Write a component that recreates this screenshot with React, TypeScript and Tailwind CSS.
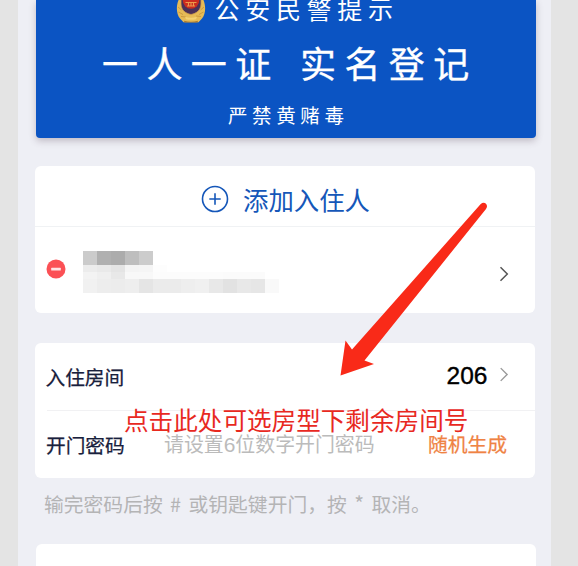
import React from "react";

const mosaicRows: { height: string; cells: string[] }[] = [
  { height: "h-[14px]", cells: ["bg-[#cbcbcb]", "bg-[#b0b0b0]", "bg-[#acacac]", "bg-[#bebebe]", "bg-[#cccccc]"] },
  { height: "h-[7px]", cells: ["bg-[#ececec]", "bg-[#e9e9e9]", "bg-[#e4e4e4]", "bg-[#f4f4f4]", "bg-[#f5f5f5]", "bg-[#fdfdfd]"] },
  {
    height: "h-[7px]",
    cells: ["bg-[#f3f3f3]", "bg-[#efefef]", "bg-[#e8e8e8]", "bg-[#f8f8f8]", "bg-[#f8f8f8]", "bg-[#fcfcfc]", "bg-[#fcfcfc]", "bg-[#fcfcfc]", "bg-[#fcfcfc]", "bg-[#fcfcfc]", "bg-[#fbfbfb]", "bg-[#fbfbfb]", "bg-[#fbfbfb]"],
  },
  {
    height: "h-[14px]",
    cells: ["bg-[#f1f1f1]", "bg-[#ededed]", "bg-[#ececec]", "bg-[#eeeeee]", "bg-[#e5e5e5]", "bg-[#ebebeb]", "bg-[#ebebeb]", "bg-[#eeeeee]", "bg-[#f0f0f0]", "bg-[#e8e8e8]", "bg-[#e2e2e2]", "bg-[#e8e8e8]", "bg-[#e6e6e6]", "bg-[#f9f9f9]"],
  },
];

function Mosaic() {
  return (
    <div className="flex w-[196px] flex-col">
      {mosaicRows.map((row, i) => (
        <div key={i} className={`flex ${row.height}`}>
          {row.cells.map((c, j) => (
            <div key={j} className={`w-[14px] ${c}`} />
          ))}
        </div>
      ))}
    </div>
  );
}

function PoliceBadge() {
  return (
    <svg width="30" height="34" viewBox="0 0 30 34" className="shrink-0">
      <path d="M3 9C0 15 0 24 4 28.500L7.500 32.300H22.500L26 28.500C30 24 30 15 27 9L22 12H8Z" fill="#e6bb56" />
      <path d="M2 17l3.500 3M2.500 22l4.500 2.500M5 26.500l5 .5M28 17l-3.500 3M27.500 22l-4.500 2.500M25 26.500l-5-.5" stroke="#c9963c" strokeWidth=".9" />
      <path d="M5 4H25V14C25 20 20.500 23.500 15 24.500C9.500 23.500 5 20 5 14Z" fill="#4a3158" stroke="#d2a04c" strokeWidth=".8" />
      <ellipse cx="15" cy="10" rx="8.300" ry="8.800" fill="#cb2c1f" />
      <path d="M9.500 12.500h11M12.500 12v3.500M17.500 12v3.500M15 12v3.500M11 16h8" stroke="#ec9a4a" strokeWidth="1.100" />
      <path d="M8 30.800Q15 32.800 22 30.800L21.500 32.500H8.500Z" fill="#a87830" />
      <path d="M9 26.800Q15 28.800 21 26.800L20 29.300Q15 30.300 10 29.300Z" fill="#f4d272" />
    </svg>
  );
}

function Chevron({ className }: { className: string }) {
  return (
    <svg width="10" height="16" viewBox="0 0 10 16" fill="none" className={`shrink-0 ${className}`}>
      <path d="M1.500 1.200L8.300 8L1.500 14.800" stroke="currentColor" strokeWidth="1.500" />
    </svg>
  );
}

export default function App() {
  return (
    <div className="relative flex h-[566px] w-[578px] justify-start overflow-hidden bg-[#e4e4e4] pl-[18px] font-['Noto_Sans_CJK_SC',sans-serif] whitespace-nowrap">
      <main className="flex h-[566px] w-[533px] flex-col overflow-hidden bg-[#eeeff5] pl-[17px]">
        <section className="ml-px flex h-[138px] w-[500px] shrink-0 flex-col rounded-b-[4px] bg-[#0b54c3] text-white shadow-[0_3px_7px_rgba(90,70,90,0.3)]">
          <div className="flex h-[24px] items-end pl-[140px]">
            <PoliceBadge />
            <span className="ml-[8.5px] h-[31px] text-[25px] leading-[30px] tracking-[5.7px]">公安民警提示</span>
          </div>
          <div className="mt-[16px] h-[44px] pl-[66px] text-[36px] leading-[44px] tracking-[8.4px] [word-spacing:4px] [-webkit-text-stroke:0.35px_white]">一人一证 实名登记</div>
          <div className="mt-[17px] h-[28px] pl-[192px] text-[19.5px] leading-[28px] tracking-[4.6px]">严禁黄赌毒</div>
        </section>

        <section className="mt-[28px] flex h-[147px] w-[499.5px] shrink-0 flex-col rounded-[6px] bg-white">
          <button className="flex h-[61px] shrink-0 items-center border-b border-[#f0f2f4] pt-[6px] pl-[166px] text-[#1557b9]">
            <svg width="28" height="28" viewBox="0 0 28 28" fill="none" stroke="currentColor" strokeWidth="1.600">
              <circle cx="14" cy="14" r="12.500" />
              <path d="M8.300 14H19.700M14 8.300V19.700" />
            </svg>
            <span className="ml-[14px] text-[25.4px] leading-[36px]">添加入住人</span>
          </button>
          <div className="flex flex-1 items-start pl-[11px]">
            <svg width="20" height="20" viewBox="0 0 20 20" className="mt-[32px]">
              <circle cx="10" cy="10" r="9.500" fill="#fb5055" />
              <rect x="5.200" y="8.700" width="9.600" height="2.700" rx=".5" fill="#ffe3e4" />
            </svg>
            <div className="mt-[24px] ml-[17px]">
              <Mosaic />
            </div>
            <Chevron className="mt-[39px] ml-[220px] text-[#555]" />
          </div>
        </section>

        <section className="relative mt-[30px] flex h-[135px] w-[499.5px] shrink-0 flex-col rounded-[6px] bg-white text-[19.7px] leading-[30px]">
          <div className="ml-[12px] flex h-[68px] shrink-0 items-center border-b border-[#f1f1f3]">
            <span className="-ml-[1.5px] w-[400px] text-[#18203c] [-webkit-text-stroke:0.25px_#18203c]">入住房间</span>
            <span className="ml-[1px] -mt-[2px] w-[44px] font-['Liberation_Sans',Arial,sans-serif] text-[24.5px] text-black [-webkit-text-stroke:0.4px_black]">206</span>
            <Chevron className="-mt-[4px] ml-[8.5px] h-[15px] text-[#999]" />
          </div>
          <div className="flex h-[67px] items-center pl-[11px]">
            <span className="w-[118px] text-[#18203c] [-webkit-text-stroke:0.25px_#18203c]">开门密码</span>
            <span className="w-[264px] text-[19.9px] text-[#bbbbbb]">
              请设置<span className="font-['Liberation_Sans',Arial,sans-serif] text-[21px]">6</span>位数字开门密码
            </span>
            <button className="-mt-[2px] text-[19.8px] text-[#ef8344] [-webkit-text-stroke:0.25px_#ef8344]">随机生成</button>
          </div>
          <p className="absolute top-[58px] left-[89px] text-[24.6px] leading-[36px] text-[#e8291f]">点击此处可选房型下剩余房间号</p>
        </section>

        <p className="mt-[10px] h-[30px] shrink-0 pl-[9px] text-[19.8px] leading-[30px] text-[#b4b4b5] [word-spacing:3px]">
          输完密码后按 # 或钥匙键开门，按 <span className="text-[21px]">*</span> 取消。
        </p>
        <section className="mt-[26px] ml-px h-[40px] w-[500px] shrink-0 rounded-t-[6px] bg-white" />
      </main>

      <svg className="absolute top-[195px] left-[330px]" width="170" height="190" viewBox="330 195 170 190">
        <path d="M340.500 375.500L345.500 340.500L352 349.500L480.500 204.300Q483.500 201.700 486 203.800Q488 206 486 209L364.500 360.500L374 364Z" fill="#f92a18" />
      </svg>
    </div>
  );
}
